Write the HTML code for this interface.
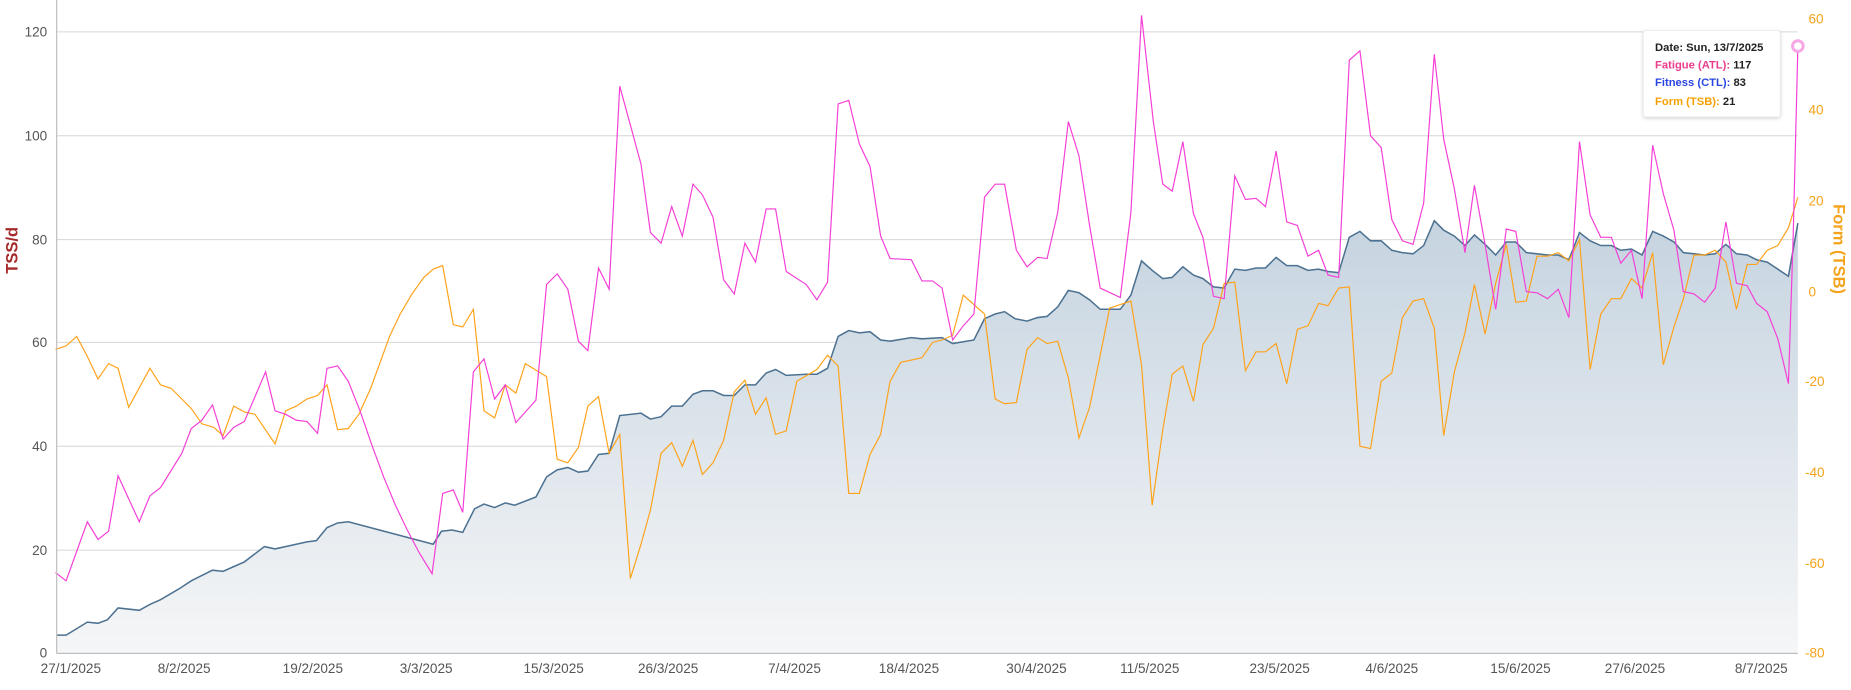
<!DOCTYPE html>
<html><head><meta charset="utf-8"><style>
html,body{margin:0;padding:0;background:#fff;}
svg{display:block;font-family:"Liberation Sans",sans-serif;}
</style></head><body>
<svg width="1851" height="690" viewBox="0 0 1568 584.5" xmlns="http://www.w3.org/2000/svg">
<defs>
<linearGradient id="g" gradientUnits="userSpaceOnUse" x1="0" y1="190" x2="0" y2="553">
<stop offset="0" stop-color="#c6d4e0"/><stop offset="1" stop-color="#f5f6f7"/>
</linearGradient>
<filter id="sh" x="-20%" y="-20%" width="140%" height="150%"><feDropShadow dx="0" dy="1" stdDeviation="1.5" flood-color="#000" flood-opacity="0.18"/></filter>
</defs>
<g stroke="#d6d6d6" stroke-width="0.9">
<line x1="48" y1="27" x2="1523" y2="27"/><line x1="48" y1="115" x2="1523" y2="115"/><line x1="48" y1="203" x2="1523" y2="203"/><line x1="48" y1="290" x2="1523" y2="290"/><line x1="48" y1="378" x2="1523" y2="378"/><line x1="48" y1="466" x2="1523" y2="466"/>
</g>
<path fill="url(#g)" d="M48,553 L48,538 56,538 74,527 83,528 91,525 100,515 118,517 127,512 136,508 153,498 162,492 180,483 189,484 198,480 207,476 224,463 233,465 260,459 268,458 277,447 286,443 295,442 367,461 374,450 383,449 392,451 402,431 410,427 419,430 428,426 436,428 454,421 463,404 472,398 481,396 490,400 498,399 507,385 516,384 525,352 543,350 551,355 560,353 569,344 578,344 587,334 595,331 604,331 613,335 622,335 631,326 640,326 649,316 657,313 666,318 683,317 692,317 701,312 710,285 719,280 728,282 737,281 746,288 754,289 772,286 781,287 798,286 807,291 825,288 834,270 843,266 851,264 860,270 870,272 879,269 887,268 896,260 905,246 914,248 923,254 932,262 949,262 958,250 967,221 976,229 985,236 993,235 1002,226 1011,233 1019,236 1028,243 1037,244 1046,228 1055,229 1064,227 1072,227 1081,218 1090,225 1099,225 1108,229 1117,228 1125,230 1134,231 1143,201 1152,196 1161,204 1170,204 1179,212 1188,214 1197,215 1206,208 1215,187 1223,195 1232,200 1241,208 1249,199 1258,207 1267,216 1276,205 1284,205 1293,214 1302,215 1311,216 1320,216 1329,220 1338,197 1347,204 1356,208 1365,208 1373,212 1382,211 1391,216 1400,196 1409,200 1418,205 1426,214 1435,215 1444,216 1453,215 1462,207 1471,215 1480,216 1488,220 1497,222 1506,228 1515,234 1523,189 L1523,553 Z"/>
<polyline fill="none" stroke="#4d7291" stroke-width="1.3" points="48,538 56,538 74,527 83,528 91,525 100,515 118,517 127,512 136,508 153,498 162,492 180,483 189,484 198,480 207,476 224,463 233,465 260,459 268,458 277,447 286,443 295,442 367,461 374,450 383,449 392,451 402,431 410,427 419,430 428,426 436,428 454,421 463,404 472,398 481,396 490,400 498,399 507,385 516,384 525,352 543,350 551,355 560,353 569,344 578,344 587,334 595,331 604,331 613,335 622,335 631,326 640,326 649,316 657,313 666,318 683,317 692,317 701,312 710,285 719,280 728,282 737,281 746,288 754,289 772,286 781,287 798,286 807,291 825,288 834,270 843,266 851,264 860,270 870,272 879,269 887,268 896,260 905,246 914,248 923,254 932,262 949,262 958,250 967,221 976,229 985,236 993,235 1002,226 1011,233 1019,236 1028,243 1037,244 1046,228 1055,229 1064,227 1072,227 1081,218 1090,225 1099,225 1108,229 1117,228 1125,230 1134,231 1143,201 1152,196 1161,204 1170,204 1179,212 1188,214 1197,215 1206,208 1215,187 1223,195 1232,200 1241,208 1249,199 1258,207 1267,216 1276,205 1284,205 1293,214 1302,215 1311,216 1320,216 1329,220 1338,197 1347,204 1356,208 1365,208 1373,212 1382,211 1391,216 1400,196 1409,200 1418,205 1426,214 1435,215 1444,216 1453,215 1462,207 1471,215 1480,216 1488,220 1497,222 1506,228 1515,234 1523,189"/>
<polyline fill="none" stroke="#ffa21a" stroke-width="1" points="47,296 56,293 65,285 74,302 83,321 92,308 100,312 109,345 127,312 136,326 145,329 154,338 162,346 171,359 181,362 189,369 198,344 207,349 216,351 233,376 242,348 251,344 260,338 269,335 277,326 286,364 295,363 304,351 314,329 322,307 330,285 339,266 349,249 359,235 367,228 375,225 384,275 392,277 401,262 410,348 419,354 428,326 437,333 445,308 463,319 472,389 481,392 490,379 498,344 507,336 516,384 525,368 534,490 543,461 551,432 560,384 569,375 578,395 587,373 595,402 604,392 613,373 622,332 631,322 640,351 649,337 657,368 666,365 675,323 692,313 701,301 710,310 719,418 728,418 737,385 746,368 754,323 763,307 781,303 790,290 798,288 807,284 816,250 834,266 843,338 851,342 861,341 870,296 879,286 887,291 896,289 905,320 914,371 923,345 932,301 940,261 958,255 967,309 976,428 985,364 993,317 1002,310 1011,340 1019,292 1028,278 1037,240 1046,239 1055,314 1064,298 1072,298 1081,291 1090,325 1099,279 1108,276 1117,257 1125,259 1134,244 1143,243 1152,378 1161,380 1170,323 1179,316 1188,269 1197,255 1206,253 1215,278 1223,369 1232,315 1241,282 1249,241 1258,283 1267,240 1276,207 1284,256 1293,255 1302,217 1311,217 1320,214 1329,221 1338,203 1347,313 1356,266 1365,253 1373,253 1382,236 1391,244 1400,214 1409,309 1418,277 1426,253 1435,216 1444,216 1453,212 1462,222 1471,262 1480,224 1488,224 1497,212 1506,208 1515,193 1523,167"/>
<polyline fill="none" stroke="#f53ed6" stroke-width="1" points="47,485 56,492 74,442 83,457 92,450 100,403 118,442 127,420 136,413 154,384 162,363 171,356 180,343 189,372 198,362 207,357 225,315 233,348 242,351 251,356 260,357 269,367 277,312 286,310 295,323 305,348 315,377 325,404 335,428 345,449 355,468 366,486 375,418 384,415 392,434 401,315 410,304 419,338 428,326 437,358 454,339 463,241 472,232 481,245 490,289 498,297 507,227 516,245 525,73 543,139 551,197 560,206 569,175 578,200 587,156 595,165 604,184 613,237 622,249 631,206 640,222 649,177 657,177 666,230 683,241 692,254 701,239 710,88 719,85 728,122 737,141 746,200 754,219 772,220 781,238 790,238 798,244 807,288 816,276 825,266 834,167 843,156 851,156 861,212 870,226 879,218 887,219 896,180 905,103 914,132 923,191 932,244 949,252 958,180 967,13 977,103 985,156 993,162 1002,120 1011,181 1019,201 1028,251 1037,253 1046,149 1055,169 1064,168 1072,175 1081,128 1090,188 1099,191 1108,217 1117,212 1125,233 1134,235 1143,51 1152,43 1161,115 1170,125 1179,186 1188,204 1197,207 1206,172 1215,46 1223,118 1232,160 1241,214 1249,157 1258,207 1267,262 1276,194 1284,196 1293,247 1302,248 1311,253 1320,245 1329,269 1338,120 1347,182 1356,201 1365,201 1373,223 1382,212 1391,253 1400,123 1409,164 1418,195 1426,247 1435,249 1444,256 1453,244 1462,188 1471,240 1480,242 1488,257 1497,264 1506,287 1515,325 1519,201 1523,39"/>
<line x1="48" y1="0" x2="48" y2="553.5" stroke="#bdbdbd" stroke-width="1"/>
<line x1="48" y1="553.5" x2="1523" y2="553.5" stroke="#bdbdbd" stroke-width="1"/>
<circle cx="1523" cy="39" r="4.5" fill="#fff" stroke="#f7a6e6" stroke-width="2.5"/>
<g fill="#555" font-size="11.5" text-anchor="end">
<text x="40" y="31">120</text><text x="40" y="119">100</text><text x="40" y="207">80</text><text x="40" y="294">60</text><text x="40" y="382">40</text><text x="40" y="470">20</text><text x="40" y="557">0</text>
</g>
<g fill="#f5a31a" font-size="11.5">
<text x="1532" y="20">60</text><text x="1532" y="97">40</text><text x="1532" y="174">20</text><text x="1532" y="251">0</text><text x="1529" y="327">-20</text><text x="1529" y="404">-40</text><text x="1529" y="481">-60</text><text x="1529" y="557">-80</text>
</g>
<g fill="#555" font-size="11.5" text-anchor="middle">
<text x="60" y="570">27/1/2025</text><text x="156" y="570">8/2/2025</text><text x="265" y="570">19/2/2025</text><text x="361" y="570">3/3/2025</text><text x="469" y="570">15/3/2025</text><text x="566" y="570">26/3/2025</text><text x="673" y="570">7/4/2025</text><text x="770" y="570">18/4/2025</text><text x="878" y="570">30/4/2025</text><text x="974" y="570">11/5/2025</text><text x="1084" y="570">23/5/2025</text><text x="1179" y="570">4/6/2025</text><text x="1288" y="570">15/6/2025</text><text x="1385" y="570">27/6/2025</text><text x="1492" y="570">8/7/2025</text>
</g>
<text transform="translate(15,212) rotate(-90)" text-anchor="middle" fill="#a52a2a" font-size="14" font-weight="bold">TSS/d</text>
<text transform="translate(1553,211) rotate(90)" text-anchor="middle" fill="#f5a31a" font-size="14" font-weight="bold">Form (TSB)</text>
<g filter="url(#sh)"><rect x="1392" y="26" width="116" height="73" rx="2" fill="#fff" stroke="#e6e6e6" stroke-width="0.6"/></g>
<g font-size="9.5" font-weight="bold">
<text x="1402" y="43" fill="#222">Date: Sun, 13/7/2025</text>
<text x="1402" y="58"><tspan fill="#ea3c8c">Fatigue (ATL):</tspan><tspan fill="#222"> 117</tspan></text>
<text x="1402" y="73"><tspan fill="#2a45e0">Fitness (CTL):</tspan><tspan fill="#222"> 83</tspan></text>
<text x="1402" y="89"><tspan fill="#f5a000">Form (TSB):</tspan><tspan fill="#222"> 21</tspan></text>
</g>
</svg>
</body></html>
